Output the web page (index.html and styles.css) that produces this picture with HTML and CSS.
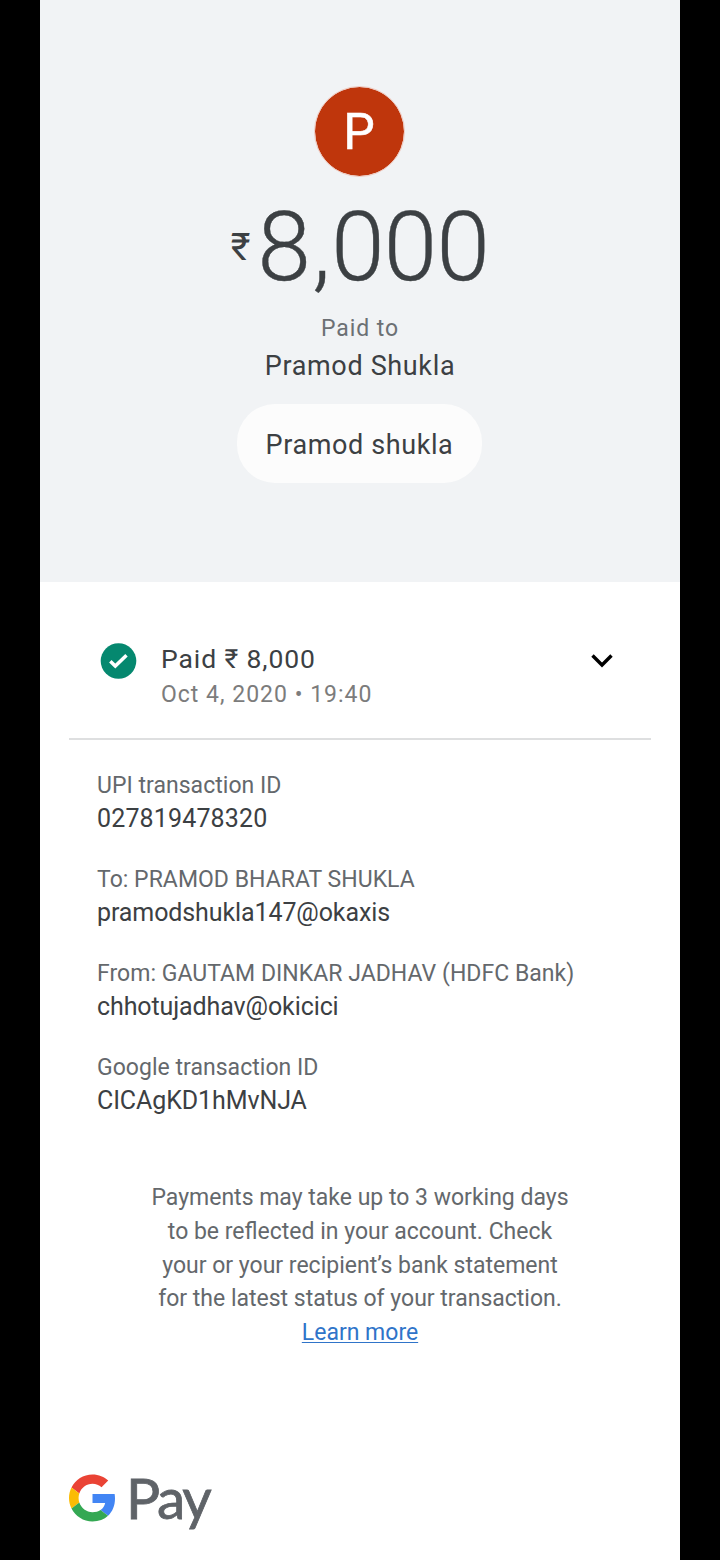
FILE: index.html
```html
<!DOCTYPE html>
<html lang="en">
<head>
<meta charset="utf-8">
<title>Google Pay transaction</title>
<link rel="stylesheet" href="styles.css">
</head>
<body>
<main class="receipt">
  <header class="summary">
    <div class="avatar">P</div>
    <div class="amount"><span class="currency">₹</span><span class="digits"><span class="lead">8</span><span class="comma">,</span>000</span></div>
    <div class="direction">Paid to</div>
    <div class="payee">Pramod Shukla</div>
    <div class="note">Pramod shukla</div>
  </header>
  <section class="status">
    <svg class="check" viewBox="0 0 36 36"><circle cx="18" cy="18" r="17.8" fill="#05886f"/><path d="M9.800 18.300l5 4.700L26 12.200" fill="none" stroke="#fff" stroke-width="3.5"/></svg>
    <div class="status-text">
      <div class="status-title">Paid ₹ 8,000</div>
      <div class="status-date">Oct 4, 2020 • 19:40</div>
    </div>
    <svg class="chevron" viewBox="0 0 24 16"><path d="M2.500 2.500L12 12l9.500-9.500" fill="none" stroke="#000" stroke-width="3.400"/></svg>
  </section>
  <dl class="details">
    <div class="detail"><dt>UPI transaction ID</dt><dd class="number">027819478320</dd></div>
    <div class="detail"><dt>To: PRAMOD BHARAT SHUKLA</dt><dd>pramodshukla147@okaxis</dd></div>
    <div class="detail"><dt>From: GAUTAM DINKAR JADHAV (HDFC Bank)</dt><dd>chhotujadhav@okicici</dd></div>
    <div class="detail"><dt>Google transaction ID</dt><dd>CICAgKD1hMvNJA</dd></div>
  </dl>
  <p class="notice">Payments may take up to 3 working days<br>to be reflected in your account. Check<br>your or your recipient’s bank statement<br>for the latest status of your transaction.<br><a class="link" href="#">Learn more</a></p>
  <footer class="brand">
    <svg class="g-logo" viewBox="0 0 48 48"><path fill="#ea4335" d="M24 9.500c3.540 0 6.710 1.220 9.210 3.600l6.850-6.850C35.900 2.380 30.470 0 24 0 14.620 0 6.510 5.380 2.560 13.220l7.980 6.190C12.430 13.720 17.740 9.500 24 9.500z"/><path fill="#4285f4" d="M46.980 24.550c0-1.570-.15-3.090-.38-4.550H24v9.020h12.940c-.58 2.960-2.260 5.480-4.780 7.180l7.730 6c4.510-4.180 7.090-10.360 7.090-17.650z"/><path fill="#fbbc05" d="M10.530 28.590c-.48-1.450-.76-2.990-.76-4.590s.27-3.140.76-4.590l-7.980-6.190C.92 16.460 0 20.120 0 24c0 3.880.92 7.540 2.560 10.780l7.970-6.190z"/><path fill="#34a853" d="M24 48c6.480 0 11.930-2.130 15.890-5.810l-7.730-6c-2.150 1.450-4.920 2.300-8.160 2.300-6.260 0-11.570-4.220-13.470-9.910l-7.980 6.190C6.510 42.620 14.620 48 24 48z"/></svg>
    <span class="brand-name">Pay</span>
  </footer>
</main>
</body>
</html>
```

FILE: styles.css
```css
* { box-sizing: border-box; }

body {
  margin: 0;
  background: #000;
  font-family: Roboto, "Liberation Sans", sans-serif;
  color: #3c4043;
}

.receipt {
  width: 640px;
  height: 1560px;
  margin: 0 auto;
  background: #fff;
  overflow: hidden;
}

.summary {
  height: 582px;
  padding-top: 86px;
  background: #f1f3f5;
  display: flex;
  flex-direction: column;
  align-items: center;
}

.avatar {
  width: 91px;
  height: 91px;
  margin-right: 1px;
  border-radius: 50%;
  border: 1px solid #efc9c0;
  background: #bf360c;
  background-clip: padding-box;
  color: #fff;
  font-size: 50px;
  line-height: 90px;
  text-align: center;
  text-indent: -1px;
  -webkit-text-stroke: 0.5px #fff;
}

.amount {
  display: flex;
  align-items: center;
  height: 100px;
  margin-top: 20px;
}

.currency {
  font-size: 38px;
  line-height: 50px;
  margin-right: 7px;
}

.digits {
  font-size: 96px;
  line-height: 100px;
  font-weight: 300;
  letter-spacing: -0.6px;
  -webkit-text-stroke: 0.4px #3c4043;
}

.lead { letter-spacing: 1.5px; }

.comma { letter-spacing: 0.5px; }

.direction {
  margin-top: 17px;
  font-size: 23px;
  line-height: 30px;
  letter-spacing: 0.9px;
  color: #6c7074;
}

.payee {
  margin-top: 4px;
  font-size: 27px;
  line-height: 36px;
  letter-spacing: 0.65px;
}

.note {
  width: 245px;
  height: 79px;
  margin: 20px 1px 0 0;
  border-radius: 38px;
  background: #fcfcfc;
  font-size: 27px;
  line-height: 82px;
  letter-spacing: 0.6px;
  text-align: center;
}

.status {
  height: 158px;
  margin: 0 29px;
  padding: 59px 36px 0 31px;
  border-bottom: 2px solid #dedfe0;
  display: flex;
}

.check { width: 37px; height: 36px; margin: 1.500px 24px 0 0; }

.status-text { flex: 1; }

.status-title {
  font-size: 26.5px;
  line-height: 35px;
  letter-spacing: 0.9px;
}

.status-date {
  font-size: 23px;
  line-height: 38px;
  letter-spacing: 1px;
  color: #7c7c7c;
}

.chevron { width: 24px; height: 16px; margin: 12px 1px 0 0; }

.details { margin: 28.500px 57px 0; }

.detail { height: 94px; }

dt {
  font-size: 23px;
  line-height: 33px;
  letter-spacing: 0.03px;
  color: #64686c;
}

dd {
  margin: 0;
  font-size: 25px;
  line-height: 33px;
  letter-spacing: -0.1px;
}

.number { letter-spacing: 0.15px; }

.notice {
  margin: 36.500px 0 0;
  font-size: 23px;
  line-height: 33.800px;
  text-align: center;
  color: #64686c;
}

.link {
  color: #2f74c9;
  text-decoration-thickness: 1px;
  text-underline-offset: 2px;
}

.brand {
  display: flex;
  align-items: center;
  height: 80px;
  margin: 108px 0 0 29px;
}

.g-logo { width: 47px; height: 48px; }

.brand-name {
  margin: -2px 0 0 10px;
  font-family: Lato, sans-serif;
  font-size: 57px;
  line-height: 80px;
  letter-spacing: -2.3px;
  color: #5f6368;
  -webkit-text-stroke: 0.8px #5f6368;
}
```
